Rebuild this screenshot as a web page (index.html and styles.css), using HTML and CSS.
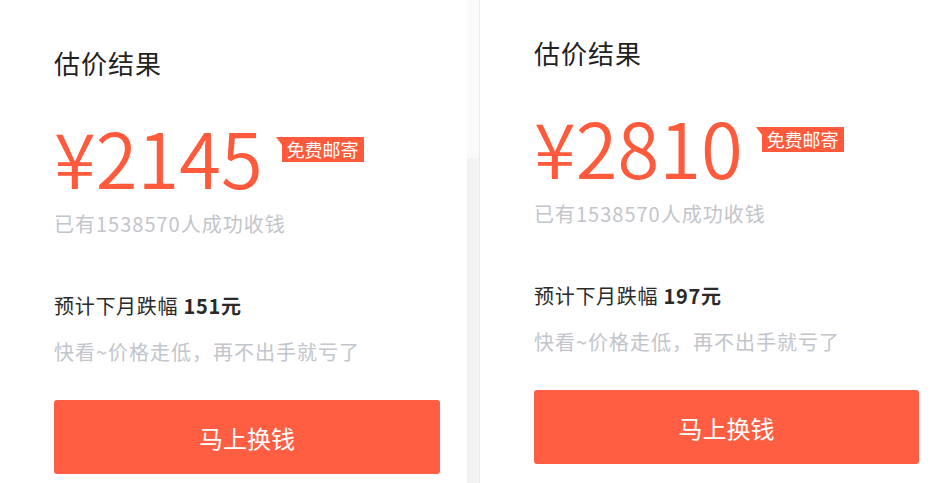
FILE: index.html
```html
<!DOCTYPE html>
<html lang="zh-CN">
<head>
<meta charset="utf-8">
<title>估价结果</title>
<link rel="stylesheet" href="styles.css">
</head>
<body>
<div class="row">
  <section class="card card-left">
    <h2 class="title">估价结果</h2>
    <div class="price-row">
      <span class="price">¥2145</span>
      <span class="badge">免费邮寄</span>
    </div>
    <p class="sub">已有1538570人成功收钱</p>
    <p class="forecast">预计下月跌幅 <b>151元</b></p>
    <p class="tip">快看~价格走低，再不出手就亏了</p>
    <button class="btn">马上换钱</button>
  </section>
  <div class="divider"></div>
  <section class="card card-right">
    <h2 class="title">估价结果</h2>
    <div class="price-row">
      <span class="price">¥2810</span>
      <span class="badge">免费邮寄</span>
    </div>
    <p class="sub">已有1538570人成功收钱</p>
    <p class="forecast">预计下月跌幅 <b>197元</b></p>
    <p class="tip">快看~价格走低，再不出手就亏了</p>
    <button class="btn">马上换钱</button>
  </section>
</div>
</body>
</html>
```
FILE: styles.css
```css
* { box-sizing: border-box; }
html, body { margin: 0; padding: 0; background: #fff; }
body {
  font-family: "Noto Sans CJK SC", "Noto Sans", sans-serif;
  color: #333;
  width: 947px;
  height: 483px;
  overflow: hidden;
}
.row { display: flex; align-items: flex-start; height: 483px; }
.card {
  width: 467px;
  height: 483px;
  display: flex;
  flex-direction: column;
  align-items: flex-start;
  background: #fff;
}
.card-left { padding: 48px 27px 0 54px; }
.card-right { width: 467px; padding: 38px 28px 0 54px; }
.divider {
  width: 13px;
  height: 483px;
  background: linear-gradient(#fafafa 0, #fafafa 158px, #f3f3f3 158px);
  border-right: 1px solid #ebebeb;
}
.title {
  margin: 0;
  font-size: 26px;
  line-height: 30px;
  font-weight: 400;
  letter-spacing: 1px;
  color: #222;
}
.price-row {
  display: flex;
  align-items: flex-start;
  margin-top: 40px;
  height: 76px;
}
.price {
  font-size: 76px;
  line-height: 76px;
  font-weight: 350;
  color: #ff5a3c;
}
.badge {
  position: relative;
  margin: 19px 0 0 19px;
  background: #ff5a3c;
  color: #fff;
  font-size: 18px;
  line-height: 25px;
  height: 25px;
  padding: 0 5px;
}
.badge::before {
  content: "";
  position: absolute;
  left: -6px;
  top: 0;
  border-top: 8px solid #ff5a3c;
  border-left: 6px solid transparent;
}
.sub {
  margin: 17px 0 0;
  font-size: 20px;
  line-height: 26px;
  letter-spacing: 1px;
  color: #c2c5cb;
}
.forecast {
  margin: 56px 0 0;
  font-size: 20px;
  line-height: 26px;
  letter-spacing: 0.7px;
  color: #2a2a2a;
}
.forecast b { font-weight: 700; }
.tip {
  margin: 20px 0 0;
  font-size: 20px;
  line-height: 26px;
  letter-spacing: 1px;
  color: #c2c5cb;
}
.btn {
  margin-top: 35px;
  width: 386px;
  height: 74px;
  border: 0;
  border-radius: 3px;
  background: #ff5e42;
  color: #fff;
  font-family: inherit;
  font-size: 24px;
  cursor: pointer;
}
.card-right .btn { width: 385px; }
```
